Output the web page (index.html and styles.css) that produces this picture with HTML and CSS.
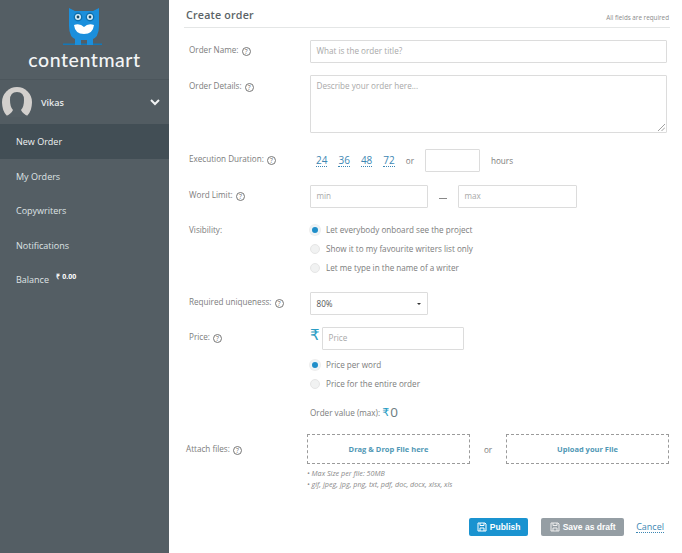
FILE: index.html
```html
<!DOCTYPE html>
<html lang="en">
<head>
<meta charset="utf-8">
<title>Create order</title>
<link rel="stylesheet" href="styles.css">
</head>
<body>
<div class="app">
  <aside class="sidebar">
    <div class="brand">
      <svg class="owl" viewBox="0 0 40 40" width="40" height="40" aria-hidden="true">
        <path fill="#1b8fdc" d="M6 0 L12 3 H30 L36 0 V18 Q36 30 28 32 H14 Q6 30 6 18 Z"/>
        <path fill="#1378b8" d="M0 35.5 H39 V37 H0 Z"/>
        <path fill="#1b8fdc" d="M12 31 h6 v6 h-6 z M24 31 h6 v6 h-6 z"/>
        <circle cx="15" cy="9" r="4.4" fill="#0f70ae"/>
        <circle cx="27" cy="9" r="4.4" fill="#0f70ae"/>
        <circle cx="15" cy="9" r="3" fill="#d8eef9"/>
        <circle cx="27" cy="9" r="3" fill="#d8eef9"/>
        <circle cx="15" cy="9" r="1.4" fill="#174a68"/>
        <circle cx="27" cy="9" r="1.4" fill="#174a68"/>
        <path fill="#fff" d="M11 17 Q17 15 21 19 Q25 15 31 17 Q30 26 21 26 Q12 26 11 17 Z"/>
      </svg>
      <div class="wordmark">contentmart</div>
    </div>
    <div class="user">
      <svg class="avatar" viewBox="0 0 30 30" width="30" height="30" aria-hidden="true">
        <path fill="#d3d0cd" d="M15 0 A15 15 0 0 1 30 15 Q30 24 25 29 H5 Q0 24 0 15 A15 15 0 0 1 15 0 Z"/>
        <path fill="#545e64" d="M15 5 Q22 5 22 13 Q22 20 19 23 Q21 27 26 29 L26 30 H4 V29 Q9 27 11 23 Q8 20 8 13 Q8 5 15 5 Z"/>
      </svg>
      <span class="user-name">Vikas</span>
      <svg class="chevron" viewBox="0 0 10 7" width="10" height="7" aria-hidden="true"><path d="M1 1 L5 5 L9 1" fill="none" stroke="#f0f2f3" stroke-width="2"/></svg>
    </div>
    <nav class="nav">
      <a class="nav-item active">New Order</a>
      <a class="nav-item">My Orders</a>
      <a class="nav-item">Copywriters</a>
      <a class="nav-item">Notifications</a>
      <a class="nav-item">Balance <sup class="balance">₹ 0.00</sup></a>
    </nav>
  </aside>
  <main class="main">
    <header class="head">
      <h1>Create order</h1>
      <small>All fields are required</small>
    </header>

    <div class="row row-name">
      <label>Order Name: <i class="q">?</i></label>
      <div class="field input wide ph">What is the order title?</div>
    </div>
    <div class="row row-details">
      <label>Order Details: <i class="q">?</i></label>
      <div class="field textarea wide ph">Describe your order here...
        <svg class="grip" viewBox="0 0 7 7" width="7" height="7" aria-hidden="true"><path d="M0 7 L7 0 M3.5 7 L7 3.5" stroke="#888" stroke-width=".8"/></svg>
      </div>
    </div>
    <div class="row row-exec">
      <label>Execution Duration: <i class="q">?</i></label>
      <div class="duration">
        <a>24</a><a>36</a><a>48</a><a>72</a>
        <span class="or">or</span>
        <div class="field input hours"></div>
        <span class="hours-label">hours</span>
      </div>
    </div>
    <div class="row row-words">
      <label>Word Limit: <i class="q">?</i></label>
      <div class="limits">
        <div class="field input mid ph">min</div>
        <span class="dash"></span>
        <div class="field input mid ph">max</div>
      </div>
    </div>
    <div class="row row-vis">
      <label>Visibility:</label>
      <div class="radios">
        <div class="radio on"><b></b>Let everybody onboard see the project</div>
        <div class="radio"><b></b>Show it to my favourite writers list only</div>
        <div class="radio"><b></b>Let me type in the name of a writer</div>
      </div>
    </div>
    <div class="row row-uniq">
      <label>Required uniqueness: <i class="q">?</i></label>
      <div class="field input mid select">80%<span class="caret"></span></div>
    </div>
    <div class="row row-price">
      <label>Price: <i class="q">?</i></label>
      <div class="price-line">
        <span class="rupee">₹</span>
        <div class="field input price ph">Price</div>
      </div>
    </div>
    <div class="row row-price-type">
      <label></label>
      <div class="radios">
        <div class="radio on"><b></b>Price per word</div>
        <div class="radio"><b></b>Price for the entire order</div>
      </div>
    </div>
    <div class="row row-value">
      <label></label>
      <div class="order-value">Order value (max): <span class="amount-sign">₹</span> <span class="amount">0</span></div>
    </div>
    <div class="row row-attach">
      <label>Attach files: <i class="q">?</i></label>
      <div class="drop">Drag &amp; Drop File here</div>
      <span class="or-drop">or</span>
      <div class="drop">Upload your File</div>
    </div>
    <div class="notes">
      <p>• Max Size per file: 50MB</p>
      <p>• gif, jpeg, jpg, png, txt, pdf, doc, docx, xlsx, xls</p>
    </div>
    <div class="actions">
      <button class="btn primary" type="button">
        <svg viewBox="0 0 10 10" width="10" height="10" aria-hidden="true"><path d="M1 1 H8 L9 2 V9 H1 Z M3 1 V3.5 H7 V1 M3 9 V6 H7 V9" fill="none" stroke="#fff" stroke-width="1"/></svg>
        Publish</button>
      <button class="btn grey" type="button">
        <svg viewBox="0 0 10 10" width="10" height="10" aria-hidden="true"><path d="M1 1 H8 L9 2 V9 H1 Z M3 1 V3.5 H7 V1 M3 9 V6 H7 V9" fill="none" stroke="#eee" stroke-width="1"/></svg>
        Save as draft</button>
      <a class="cancel">Cancel</a>
    </div>
  </main>
</div>
</body>
</html>
```
FILE: styles.css
```css
* { box-sizing: border-box; }
html, body { margin: 0; padding: 0; }
body {
  width: 682px;
  height: 553px;
  overflow: hidden;
  background: #fff;
  font-family: "Open Sans", "Liberation Sans", sans-serif;
  font-size: 8.15px;
  color: #7c7c7c;
}
.app { display: flex; height: 553px; }

/* Sidebar */
.sidebar {
  width: 169px;
  flex: none;
  background: #545e64;
  color: #e6e9ea;
}
.brand {
  height: 80px;
  padding-top: 8px;
  display: flex;
  flex-direction: column;
  align-items: center;
  border-bottom: 1px solid #4c565c;
}
.owl { display: block; margin-left: -3px; }
.wordmark {
  font-family: "Lato", "Open Sans", sans-serif;
  font-size: 19.5px;
  font-weight: 500;
  line-height: 18px;
  margin-top: 3px;
  letter-spacing: .55px;
  color: #f3f5f6;
}
.user {
  height: 44px;
  display: flex;
  align-items: center;
  padding: 0 9px 0 2px;
  background: #525c62;
}
.avatar { flex: none; }
.user-name { margin-left: 9px; font-size: 9px; font-weight: 600; color: #e8ebec; }
.chevron { margin-left: auto; }
.nav-item {
  display: block;
  height: 34.5px;
  line-height: 36px;
  padding-left: 16px;
  font-size: 9px;
  color: #dfe3e5;
}
.nav-item.active {
  background: #424e55;
  color: #f0f2f3;
}
.balance {
  font-size: 7px;
  font-weight: 700;
  color: #fff;
  vertical-align: 4px;
  line-height: 0;
  margin-left: 5px;
}

/* Main */
.main { flex: 1; padding: 0 12px 0 15px; min-width: 0; }
.head {
  height: 28px;
  display: flex;
  align-items: flex-end;
  justify-content: space-between;
  border-bottom: 1px solid #e4e6e6;
  padding: 0 1px 4px 2px;
}
.head h1 { margin: 0; font-size: 10.7px; line-height: 15px; font-weight: 600; color: #5b6366; letter-spacing: .2px; }
.head small { font-size: 6.3px; line-height: 9px; padding-bottom: 1px; color: #8b8b8b; }

.row { display: flex; align-items: flex-start; padding-left: 5px; }
.row label { width: 121px; flex: none; line-height: 20px; color: #7c7c7c; white-space: nowrap; }
.q {
  display: inline-block;
  width: 9px; height: 9px;
  border: 1px solid #777;
  border-radius: 50%;
  font-style: normal;
  font-size: 6.5px;
  line-height: 7px;
  text-align: center;
  margin-left: 1px;
  vertical-align: -1px;
  color: #666;
}
.field {
  border: 1px solid #dcdcdc;
  background: #fff;
  border-radius: 1px;
  line-height: 20px;
  padding-left: 5.5px;
  position: relative;
}
.ph { color: #a8a8a8; }
.input { height: 23px; }
.wide { width: 357px; }
.mid { width: 119px; }
.row-name { margin-top: 12px; }
.row-details { margin-top: 12px; }
.textarea { height: 58px; padding-top: 0; }
.row-details label { line-height: 21px; }
.grip { position: absolute; right: 1px; bottom: 1px; }
.row-exec { margin-top: 16px; }
.duration { display: flex; align-items: center; height: 23px; padding-left: 6px; }
.duration a {
  font-size: 10px;
  color: #3d87b3;
  border-bottom: 1px dotted #3d87b3;
  line-height: 11px;
  margin-right: 11px;
}
.or { margin: 0 11px 0 0; }
.hours { width: 55px; padding: 0; }
.hours-label { margin-left: 11px; }
.row-words { margin-top: 13px; }
.limits { display: flex; align-items: center; }
.dash { width: 8px; height: 1px; background: #888; margin: 4px 11px 0; }
.limits .mid:first-child { width: 118px; }
.row-vis { margin-top: 12px; }
.row-vis label { line-height: 19px; }
.radios { display: flex; flex-direction: column; }
.radio { display: flex; align-items: center; height: 19px; }
.radio b {
  width: 10px; height: 10px;
  border-radius: 50%;
  background: #f1f2f2;
  border: 1px solid #e6e6e6;
  margin-right: 6px;
  flex: none;
  position: relative;
}
.radio.on b { background: #1f8ec9; border: 2px solid #eef4f7; box-shadow: 0 0 0 1px #eee; }
.row-uniq { margin-top: 15px; }
.select { width: 118px; color: #555; display: flex; justify-content: space-between; align-items: center; padding-right: 6px; }
.caret { width: 0; height: 0; border: 2px solid transparent; border-top: 2px solid #333; margin-top: 2px; }
.row-price { margin-top: 12px; }
.price-line { display: flex; align-items: flex-start; }
.rupee { width: 12px; font-size: 15px; line-height: 17px; color: #2b9dc4; font-family: "DejaVu Sans", sans-serif; }
.price { width: 142px; }
.row-price-type { margin-top: 5px; }
.row-value { margin-top: 10px; }
.row-value label { line-height: 14px; }
.order-value { line-height: 18px; }
.amount-sign { font-size: 11px; color: #2b9dc4; font-family: "DejaVu Sans", sans-serif; }
.amount { font-size: 13.5px; color: #6b7c80; vertical-align: -1px; margin-left: -1px; }
.row-attach { margin-top: 12px; padding-left: 2px; align-items: center; }
.row-attach label { width: 121px; line-height: 30px; }
.drop {
  width: 163px;
  height: 30px;
  border: 1px dashed #9b9b9b;
  text-align: center;
  line-height: 28px;
  font-weight: 700;
  color: #4f97b5;
  font-size: 7.5px;
}
.or-drop { width: 36px; text-align: center; }
.notes { padding-left: 123px; margin-top: 4px; font-style: italic; font-size: 7.2px; color: #8a8a8a; }
.notes p { margin: 0; line-height: 11px; }
.actions { display: flex; align-items: center; justify-content: flex-end; margin-top: 28px; padding-right: 6px; }
.btn {
  height: 18px;
  border: 0;
  border-radius: 2px;
  color: #fff;
  font-family: "Liberation Sans", sans-serif;
  font-size: 8.5px;
  font-weight: 700;
  display: flex;
  align-items: center;
  justify-content: center;
  gap: 3px;
  padding: 0;
}
.primary { width: 59px; background: #1a93d0; margin-right: 13px; }
.grey { width: 83px; background: #959ea4; margin-right: 12px; }
.cancel { color: #3d87b3; border-bottom: 1px dotted #3d87b3; line-height: 11px; font-size: 9px; }
```
